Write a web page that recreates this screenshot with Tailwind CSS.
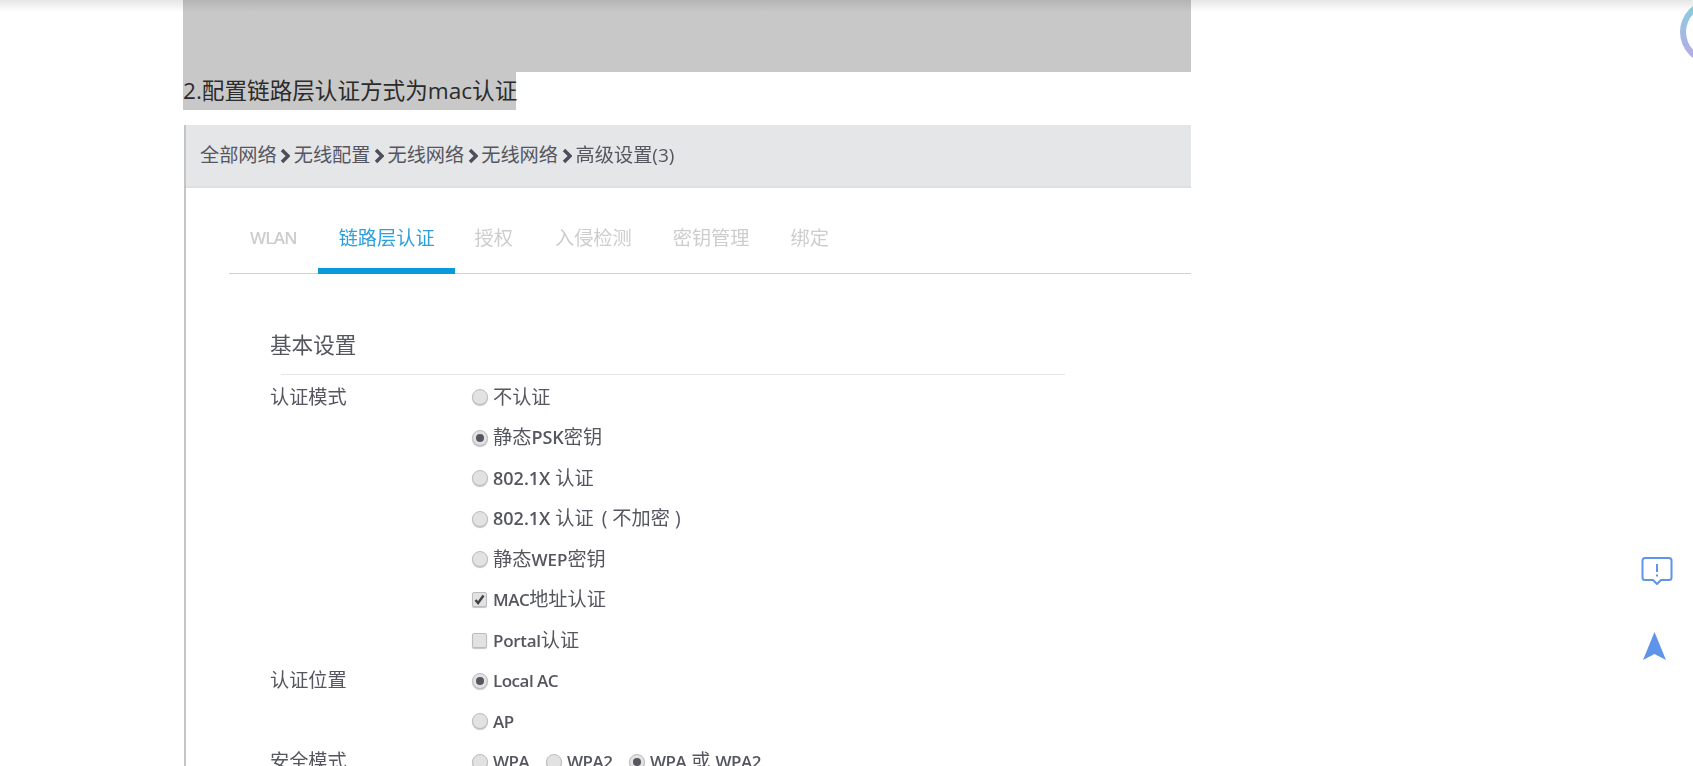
<!DOCTYPE html>
<html lang="zh-CN">
<head>
  <meta charset="UTF-8" />
  <title>配置链路层认证方式</title>
  <script src="https://cdn.jsdelivr.net/npm/@tailwindcss/browser@4"></script>
</head>
<body class="bg-white h-[766px] overflow-hidden relative font-['Open_Sans','Noto_Sans_CJK_SC',sans-serif]">

  <!-- top shadow of the fixed header -->
  <div class="absolute inset-x-0 top-0 h-[12px] bg-gradient-to-b from-black/10 to-transparent z-10"></div>

  <main class="ml-[183px] w-[1008px]">
    <div class="h-[72px] bg-[#c8c8c8]"></div>
    <p class="w-[333px] h-[38px] bg-[#c8c8c8] text-[22.6px] leading-[38px] text-[#2b2b2b] whitespace-nowrap">2.配置链路层认证方式为mac认证</p>

    <!-- screenshot pasted in the article -->
    <section class="mt-[15px] ml-px h-[641px] border-l-2 border-[#c4c4c4] overflow-hidden text-[#55565f] text-[19.2px] blur-[0.4px]">
      <div class="h-[63px] bg-[#e5e6e8] border-b-2 border-[#dfe0e2] flex items-center pl-[14px] whitespace-nowrap">
        <span>全部网络</span>
        <svg class="w-[10px] h-[16px] mx-[3.500px] text-[#4d4e5a]" viewBox="0 0 10 16" fill="none" stroke="currentColor" stroke-width="3.4"><path d="M2 2l6 6-6 6"/></svg>
        <span>无线配置</span>
        <svg class="w-[10px] h-[16px] mx-[3.500px] text-[#4d4e5a]" viewBox="0 0 10 16" fill="none" stroke="currentColor" stroke-width="3.4"><path d="M2 2l6 6-6 6"/></svg>
        <span>无线网络</span>
        <svg class="w-[10px] h-[16px] mx-[3.500px] text-[#4d4e5a]" viewBox="0 0 10 16" fill="none" stroke="currentColor" stroke-width="3.4"><path d="M2 2l6 6-6 6"/></svg>
        <span>无线网络</span>
        <svg class="w-[10px] h-[16px] mx-[3.800px] text-[#4d4e5a]" viewBox="0 0 10 16" fill="none" stroke="currentColor" stroke-width="3.4"><path d="M2 2l6 6-6 6"/></svg>
        <span>高级设置<span class="text-[19px]">(3)</span></span>
      </div>

      <div class="ml-[43px] h-[86px] border-b border-[#cfd0d2] flex text-[#cdcdcd] whitespace-nowrap">
        <div class="h-[86px] px-[21px] pt-[35px] leading-[30px] border-b-[6px] border-transparent text-[17px] font-semibold tracking-[-0.8px]">WLAN</div>
        <div class="h-[86px] pl-[21px] pr-[20px] pt-[35px] leading-[30px] border-b-[6px] border-[#0a9ad9] text-[#2f9fdc]">链路层认证</div>
        <div class="h-[86px] pl-[20px] pr-[21px] pt-[35px] leading-[30px] border-b-[6px] border-transparent">授权</div>
        <div class="h-[86px] px-[21px] pt-[35px] leading-[30px] border-b-[6px] border-transparent">入侵检测</div>
        <div class="h-[86px] px-[20px] pt-[35px] leading-[30px] border-b-[6px] border-transparent">密钥管理</div>
        <div class="h-[86px] px-[21px] pt-[35px] leading-[30px] border-b-[6px] border-transparent">绑定</div>
      </div>

      <div class="pl-[84px]">
        <h3 class="pt-[56px] h-[100px] leading-[30px] text-[21.6px]">基本设置</h3>
        <div class="ml-[11px] w-[784px] border-t border-[#e6e6e6]"></div>

        <div class="pt-[2px]">
          <div class="flex items-center h-[40.5px]">
            <span class="w-[202px]">认证模式</span>
            <span class="w-4 h-4 mr-[5px] rounded-full border border-[#bdbdbd] bg-[#e2e2e2] shadow-[0_1px_1px_#c4c4c4]"></span>
            <span>不认证</span>
          </div>
          <div class="flex items-center h-[40.5px]">
            <span class="w-[202px]"></span>
            <span class="w-4 h-4 mr-[5px] rounded-full border border-[#bdbdbd] bg-[#e2e2e2] shadow-[0_1px_1px_#c4c4c4] flex items-center justify-center"><span class="w-2 h-2 rounded-full bg-[#55565f]"></span></span>
            <span>静态<span class="text-[18px] font-semibold">PSK</span>密钥</span>
          </div>
          <div class="flex items-center h-[40.5px]">
            <span class="w-[202px]"></span>
            <span class="w-4 h-4 mr-[5px] rounded-full border border-[#bdbdbd] bg-[#e2e2e2] shadow-[0_1px_1px_#c4c4c4]"></span>
            <span><span class="text-[18px] font-semibold">802.1X</span> 认证</span>
          </div>
          <div class="flex items-center h-[40.5px]">
            <span class="w-[202px]"></span>
            <span class="w-4 h-4 mr-[5px] rounded-full border border-[#bdbdbd] bg-[#e2e2e2] shadow-[0_1px_1px_#c4c4c4]"></span>
            <span><span class="text-[18px] font-semibold">802.1X</span> 认证<span class="ml-[8px] mr-[5px]">(</span>不加密<span class="ml-[5px]">)</span></span>
          </div>
          <div class="flex items-center h-[40.5px]">
            <span class="w-[202px]"></span>
            <span class="w-4 h-4 mr-[5px] rounded-full border border-[#bdbdbd] bg-[#e2e2e2] shadow-[0_1px_1px_#c4c4c4]"></span>
            <span>静态<span class="text-[17px] font-semibold">WEP</span>密钥</span>
          </div>
          <div class="flex items-center h-[40.5px]">
            <span class="w-[202px]"></span>
            <span class="w-[15px] h-[15px] mr-[6px] rounded-[2px] border border-[#bdbdbd] bg-[#e2e2e2] shadow-[0_1px_1px_#c4c4c4] flex items-center justify-center">
              <svg class="w-[11px] h-[11px] text-[#3f404a]" viewBox="0 0 11 11" fill="none" stroke="currentColor" stroke-width="2.4"><path d="M1.5 6l2.6 3L9.5 1.500"/></svg>
            </span>
            <span><span class="text-[17px] font-semibold tracking-[-0.5px]">MAC</span>地址认证</span>
          </div>
          <div class="flex items-center h-[40.5px]">
            <span class="w-[202px]"></span>
            <span class="w-[15px] h-[15px] mr-[6px] rounded-[2px] border border-[#bdbdbd] bg-[#e2e2e2] shadow-[0_1px_1px_#c4c4c4]"></span>
            <span><span class="text-[17px] font-semibold tracking-[-0.3px]">Portal</span>认证</span>
          </div>
          <div class="flex items-center h-[40.5px]">
            <span class="w-[202px]">认证位置</span>
            <span class="w-4 h-4 mr-[5px] rounded-full border border-[#bdbdbd] bg-[#e2e2e2] shadow-[0_1px_1px_#c4c4c4] flex items-center justify-center"><span class="w-2 h-2 rounded-full bg-[#55565f]"></span></span>
            <span class="text-[17px] font-semibold tracking-[-0.5px]">Local AC</span>
          </div>
          <div class="flex items-center h-[40.5px]">
            <span class="w-[202px]"></span>
            <span class="w-4 h-4 mr-[5px] rounded-full border border-[#bdbdbd] bg-[#e2e2e2] shadow-[0_1px_1px_#c4c4c4]"></span>
            <span class="text-[17px] font-semibold tracking-[-0.5px]">AP</span>
          </div>
          <div class="flex items-center h-[40.5px]">
            <span class="w-[202px]">安全模式</span>
            <span class="w-4 h-4 mr-[5px] rounded-full border border-[#bdbdbd] bg-[#e2e2e2] shadow-[0_1px_1px_#c4c4c4]"></span>
            <span class="w-[53px] text-[17px] font-semibold tracking-[-0.5px]">WPA</span>
            <span class="w-4 h-4 mr-[5px] rounded-full border border-[#bdbdbd] bg-[#e2e2e2] shadow-[0_1px_1px_#c4c4c4]"></span>
            <span class="w-[62px] text-[17px] font-semibold tracking-[-0.5px]">WPA2</span>
            <span class="w-4 h-4 mr-[5px] rounded-full border border-[#bdbdbd] bg-[#e2e2e2] shadow-[0_1px_1px_#c4c4c4] flex items-center justify-center"><span class="w-2 h-2 rounded-full bg-[#55565f]"></span></span>
            <span class="whitespace-nowrap"><span class="text-[17px] font-semibold tracking-[-0.5px]">WPA</span> 或 <span class="text-[17px] font-semibold tracking-[-0.5px]">WPA2</span></span>
          </div>
        </div>
      </div>
    </section>
  </main>

  <!-- floating widgets on the right edge -->
  <div class="absolute left-[1680px] top-0 w-[64px] h-[64px] rounded-full bg-gradient-to-b from-[#7fd0dc] to-[#b9a5ea]">
    <div class="m-[6px] w-[52px] h-[52px] rounded-full bg-white"></div>
  </div>
  <svg class="absolute left-[1641px] top-[556px] w-[32px] h-[32px] text-[#5f94ea]" viewBox="0 0 32 32" fill="none" stroke="currentColor" stroke-width="2">
    <path d="M4 2h24a2.500 2.500 0 0 1 2.500 2.500v17a2.500 2.500 0 0 1-2.500 2.500h-8l-4 4-4-4H4a2.500 2.500 0 0 1-2.500-2.500v-17A2.500 2.500 0 0 1 4 2z" stroke-linejoin="round"/>
    <path d="M16 8v8M16 18.500v2" />
  </svg>
  <svg class="absolute left-[1643px] top-[632px] w-[23px] h-[28px] text-[#5f94ea]" viewBox="0 0 23 28" fill="currentColor">
    <path d="M11.500 0L23 28l-11.500-6L0 28z"/>
  </svg>
</body>
</html>
